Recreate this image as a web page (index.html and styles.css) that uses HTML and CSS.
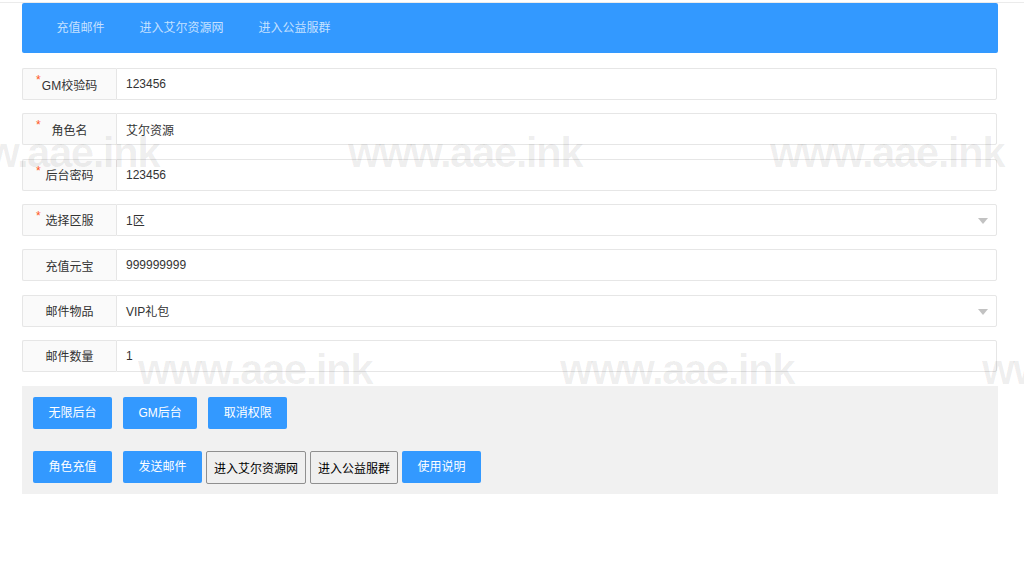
FILE: index.html
```html
<!DOCTYPE html>
<html lang="zh-CN">
<head>
<meta charset="utf-8">
<title>GM后台</title>
<link rel="stylesheet" href="styles.css">
</head>
<body>
<div class="topline"></div>
<div class="wrap">
  <ul class="nav">
    <li class="nav-item">充值邮件</li>
    <li class="nav-item">进入艾尔资源网</li>
    <li class="nav-item">进入公益服群</li>
  </ul>

  <div class="form">
    <div class="item">
      <label class="label"><span class="req">*</span>GM校验码</label>
      <div class="field">123456</div>
    </div>
    <div class="item">
      <label class="label"><span class="req">*</span>角色名</label>
      <div class="field">艾尔资源</div>
    </div>
    <div class="item">
      <label class="label"><span class="req">*</span>后台密码</label>
      <div class="field">123456</div>
    </div>
    <div class="item">
      <label class="label"><span class="req">*</span>选择区服</label>
      <div class="field select">1区<span class="arrow"></span></div>
    </div>
    <div class="item">
      <label class="label">充值元宝</label>
      <div class="field">999999999</div>
    </div>
    <div class="item">
      <label class="label">邮件物品</label>
      <div class="field select">VIP礼包<span class="arrow"></span></div>
    </div>
    <div class="item">
      <label class="label">邮件数量</label>
      <div class="field">1</div>
    </div>
  </div>

  <div class="actions">
    <div class="btn-row first">
      <button class="btn">无限后台</button>
      <button class="btn gap">GM后台</button>
      <button class="btn gap">取消权限</button>
    </div>
    <div class="btn-row">
      <button class="btn">角色充值</button>
      <button class="btn gap">发送邮件</button>
      <button class="plain small-gap">进入艾尔资源网</button>
      <button class="plain small-gap">进入公益服群</button>
      <button class="btn small-gap">使用说明</button>
    </div>
  </div>
</div>

<div class="watermarks">
  <span class="wm wm-a1">www.aae.ink</span>
  <span class="wm wm-a2">www.aae.ink</span>
  <span class="wm wm-a3">www.aae.ink</span>
  <span class="wm wm-b1">www.aae.ink</span>
  <span class="wm wm-b2">www.aae.ink</span>
  <span class="wm wm-b3">www.aae.ink</span>
</div>
</body>
</html>
```

FILE: styles.css
```css
html, body {
  margin: 0;
  padding: 0;
  background: #fff;
}

body {
  font-family: "Liberation Sans", "Noto Sans CJK SC", sans-serif;
  font-size: 12px;
  color: #333;
  position: relative;
  min-height: 573px;
  overflow: hidden;
}

.topline {
  margin-top: 2px;
  height: 1px;
  background: #ebebeb;
}

.wrap {
  margin: 0 26px 0 22px;
}

.nav {
  list-style: none;
  margin: 0;
  padding: 0 17px;
  height: 50px;
  background: #3399ff;
  border-radius: 2px;
  display: flex;
  align-items: center;
}

.nav-item {
  padding: 0 17.5px;
  color: rgba(255, 255, 255, 0.72);
  font-size: 12px;
  line-height: 50px;
}

.form {
  margin-top: 15px;
  display: flex;
  flex-direction: column;
  gap: 13.33px;
}

.item {
  display: flex;
  height: 32px;
  margin-right: 1px;
}

.label {
  position: relative;
  flex: none;
  box-sizing: border-box;
  width: 94px;
  border: 1px solid #e6e6e6;
  border-right: none;
  border-radius: 2px 0 0 2px;
  background: #fafafa;
  display: flex;
  align-items: center;
  justify-content: center;
  color: #333;
}

.req {
  position: absolute;
  left: 13px;
  top: 5px;
  color: #ff5722;
  font-size: 12px;
  line-height: 12px;
}

.field {
  position: relative;
  flex: 1;
  box-sizing: border-box;
  border: 1px solid #e6e6e6;
  border-radius: 0 2px 2px 0;
  background: #fff;
  padding-left: 9px;
  display: flex;
  align-items: center;
  color: #333;
}

.arrow {
  position: absolute;
  right: 8px;
  top: 13px;
  width: 0;
  height: 0;
  border-left: 5px solid transparent;
  border-right: 5px solid transparent;
  border-top: 6px solid #c2c2c2;
}

.actions {
  margin-top: 14px;
  background: #f1f1f1;
  padding: 11px 11px 10px;
}

.btn-row {
  display: flex;
  align-items: center;
}

.btn-row.first {
  margin-bottom: 22px;
}

.btn {
  height: 32px;
  padding: 0 15.5px;
  border: none;
  border-radius: 2px;
  background: #3399ff;
  color: #fff;
  font-family: "Liberation Sans", "Noto Sans CJK SC", sans-serif;
  font-size: 12px;
  line-height: 32px;
  white-space: nowrap;
}

.plain {
  height: 33px;
  padding: 0 7px;
  border: 1px solid #8f8f8f;
  border-radius: 2px;
  background: #efefef;
  color: #000;
  font-family: "Liberation Sans", "Noto Sans CJK SC", sans-serif;
  font-size: 12px;
  white-space: nowrap;
}

.gap {
  margin-left: 11px;
}

.small-gap {
  margin-left: 4px;
}

.watermarks {
  position: absolute;
  inset: 0;
  pointer-events: none;
}

.wm {
  position: absolute;
  font-family: "Liberation Sans", sans-serif;
  font-weight: bold;
  font-size: 42px;
  letter-spacing: -1.5px;
  line-height: 1;
  color: rgba(0, 0, 0, 0.065);
  white-space: nowrap;
}

.wm-a1 { left: -75px; top: 132px; }
.wm-a2 { left: 348px; top: 132px; }
.wm-a3 { left: 770px; top: 132px; }
.wm-b1 { left: 138px; top: 349px; }
.wm-b2 { left: 560px; top: 349px; }
.wm-b3 { left: 982px; top: 349px; }
```
